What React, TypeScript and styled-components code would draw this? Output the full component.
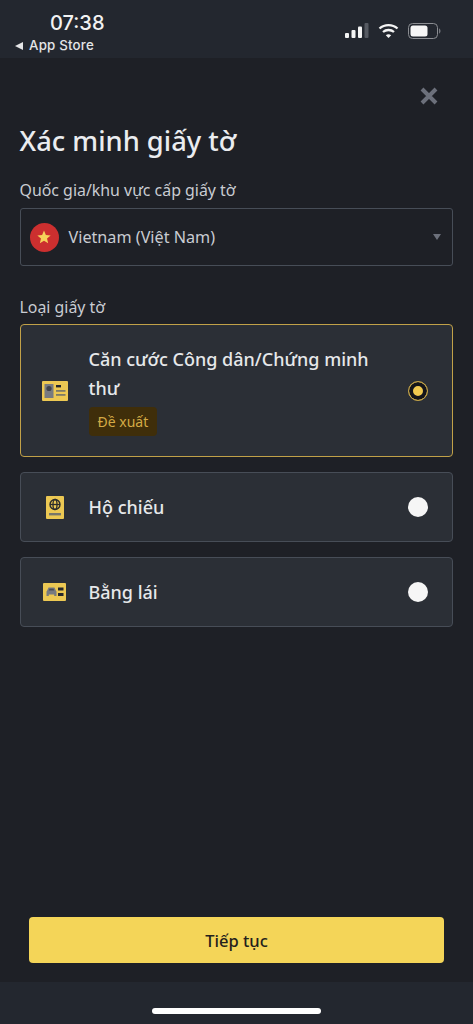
import React from 'react';
import styled, { createGlobalStyle } from 'styled-components';

const GlobalStyle = createGlobalStyle`
  html, body {
    margin: 0;
    padding: 0;
    background: #1e2026;
  }
  * {
    box-sizing: border-box;
  }
`;

const DOC_TYPES = [
  { id: 'id', label: 'Căn cước Công dân/Chứng minh thư', recommended: true, selected: true, icon: <IdIcon /> },
  { id: 'passport', label: 'Hộ chiếu', recommended: false, selected: false, icon: <PassportIcon /> },
  { id: 'license', label: 'Bằng lái', recommended: false, selected: false, icon: <LicenseIcon /> },
];

function IdIcon() {
  return (
    <svg width="26" height="20" viewBox="0 0 26 20">
      <rect width="26" height="20" rx="1" fill="#ecc853" />
      <rect x="2.500" y="3" width="9" height="14" fill="#777a80" />
      <circle cx="7" cy="7.500" r="2.600" fill="#3f434c" />
      <rect x="14" y="4" width="5" height="2.400" fill="#23262d" />
      <rect x="14" y="9" width="9.500" height="1.800" fill="#7d7a66" />
      <rect x="14" y="13" width="9.500" height="1.800" fill="#7d7a66" />
    </svg>
  );
}

function PassportIcon() {
  return (
    <svg width="18" height="23" viewBox="0 0 18 23">
      <rect width="18" height="23" rx="1" fill="#ecc853" />
      <circle cx="9" cy="8.500" r="5" fill="none" stroke="#2b2c2c" strokeWidth="1.400" />
      <ellipse cx="9" cy="8.500" rx="2" ry="5" fill="none" stroke="#2b2c2c" strokeWidth="1.300" />
      <path d="M4 8.500h10" stroke="#2b2c2c" strokeWidth="1.300" />
      <rect x="3" y="17" width="12" height="2.400" fill="#77766a" />
    </svg>
  );
}

function LicenseIcon() {
  return (
    <svg width="23" height="18" viewBox="0 0 23 18">
      <rect width="23" height="18" rx="1" fill="#ecc853" />
      <path d="M5.500 4.500h6l1.300 3 .7 1v4.500h-2.300v-1.500H5.800V13H3.500V8.500l.7-1z" fill="#777a80" />
      <path d="M6.500 5.800h4l.7 1.800H5.800z" fill="#4a4d55" />
      <rect x="15" y="4.500" width="5.500" height="3" fill="#26282c" />
      <rect x="15" y="10" width="5.500" height="3" fill="#26282c" />
    </svg>
  );
}

function App() {
  return (
    <Screen>
      <GlobalStyle />
      <StatusBar>
        <StatusLeft>
          <Clock>07:38</Clock>
          <BackLink>
            <BackArrow />
            App Store
          </BackLink>
        </StatusLeft>
        <StatusIcons>
          <svg width="24" height="16" viewBox="0 0 24 16">
            <rect x="0" y="10" width="4" height="5" rx="1" fill="#f4f4f4" />
            <rect x="6.500" y="7" width="4" height="8" rx="1" fill="#f4f4f4" />
            <rect x="13" y="3.500" width="4" height="11.500" rx="1" fill="#f4f4f4" />
            <rect x="19.500" y="0" width="4" height="15" rx="1" fill="#565a62" />
          </svg>
          <svg width="21" height="16" viewBox="0 0 21 16" fill="none" stroke="#f4f4f4" strokeWidth="2.300">
            <path d="M1.500 5.500c5-4.600 13-4.600 18 0" />
            <path d="M5 9c3-2.700 8-2.700 11 0" />
            <path d="M10.500 15 7.800 12.200c1.500-1.300 3.900-1.300 5.400 0z" fill="#f4f4f4" stroke="none" />
          </svg>
          <svg width="33" height="16" viewBox="0 0 33 16">
            <rect x="0.500" y="0.500" width="29" height="15" rx="4" fill="none" stroke="#8b8d92" />
            <rect x="2.500" y="2.500" width="17" height="11" rx="2.500" fill="#f6f6f6" />
            <path d="M31 5.500c1 .3 1.500 1.300 1.500 2.500s-.5 2.200-1.500 2.500z" fill="#74767c" />
          </svg>
        </StatusIcons>
      </StatusBar>

      <Main>
        <CloseRow>
          <svg width="20" height="20" viewBox="0 0 20 20">
            <path d="M3 3l14 14M17 3 3 17" stroke="#6c707b" strokeWidth="4" />
          </svg>
        </CloseRow>
        <Title>Xác minh giấy tờ</Title>
        <FieldLabel>Quốc gia/khu vực cấp giấy tờ</FieldLabel>
        <Select>
          <Flag>
            <svg width="14" height="14" viewBox="0 0 24 24">
              <path d="M12 1l3.200 7.600 8.200.7-6.200 5.400 1.900 8L12 18.400 4.900 22.700l1.900-8L.6 9.300l8.200-.7z" fill="#f6d25a" />
            </svg>
          </Flag>
          <SelectText>Vietnam (Việt Nam)</SelectText>
          <Caret />
        </Select>
        <TypeLabel>Loại giấy tờ</TypeLabel>
        <CardList>
          {DOC_TYPES.map((doc) => (
            <Card key={doc.id} $selected={doc.selected}>
              <IconSlot>{doc.icon}</IconSlot>
              <CardBody>
                <CardTitle>{doc.label}</CardTitle>
                {doc.recommended && <Badge>Đề xuất</Badge>}
              </CardBody>
              <Radio $selected={doc.selected} />
            </Card>
          ))}
        </CardList>
        <Footer>
          <PrimaryButton>Tiếp tục</PrimaryButton>
        </Footer>
      </Main>

      <HomeArea>
        <HomeBar />
      </HomeArea>
    </Screen>
  );
}

const Screen = styled.div`
  width: 473px;
  height: 1024px;
  display: flex;
  flex-direction: column;
  overflow: hidden;
  background: #1e2026;
  color: #e6e8ea;
  font-family: "Noto Sans", "Open Sans", sans-serif;
`;

const StatusBar = styled.div`
  height: 58px;
  flex: none;
  display: flex;
  justify-content: space-between;
  align-items: flex-start;
  padding: 11px 32px 0 15px;
  background: #23272f;
`;

const StatusLeft = styled.div`
  display: flex;
  flex-direction: column;
  align-items: flex-start;
`;

const Clock = styled.div`
  margin-left: 35px;
  font-family: "Inter", sans-serif;
  font-size: 20px;
  line-height: 24px;
  font-weight: 500;
  color: #f2f2f2;
`;

const BackLink = styled.div`
  display: flex;
  align-items: center;
  gap: 6px;
  font-family: "Inter", sans-serif;
  font-size: 13.300px;
  line-height: 21px;
  font-weight: 500;
  letter-spacing: 0.200px;
  color: #e4e5e7;
`;

const BackArrow = styled.span`
  width: 0;
  height: 0;
  border-top: 4px solid transparent;
  border-bottom: 4px solid transparent;
  border-right: 8px solid #e4e5e7;
`;

const StatusIcons = styled.div`
  display: flex;
  align-items: center;
  gap: 9px;
  margin-top: 12px;
`;

const Main = styled.div`
  flex: 1;
  display: flex;
  flex-direction: column;
  padding: 0 20px 0 19.500px;
`;

const CloseRow = styled.div`
  display: flex;
  justify-content: flex-end;
  padding: 28px 14px 0 0;
  height: 65px;
`;

const Title = styled.h1`
  margin: 0;
  font-size: 27.300px;
  line-height: 36px;
  font-weight: 500;
  color: #eaecef;
`;

const FieldLabel = styled.div`
  margin-top: 19px;
  height: 24px;
  font-size: 15.900px;
  line-height: 24px;
  color: #c9ccd2;
`;

const Select = styled.div`
  margin-top: 6px;
  height: 58px;
  display: flex;
  align-items: center;
  padding: 0 11px 0 9px;
  border: 1px solid #474d57;
  border-radius: 3px;
`;

const Flag = styled.div`
  width: 29px;
  height: 29px;
  flex: none;
  display: flex;
  align-items: center;
  justify-content: center;
  border-radius: 50%;
  background: #cc2f2f;
`;

const SelectText = styled.span`
  flex: 1;
  margin-left: 10px;
  font-size: 16.200px;
  color: #c9ccd2;
`;

const Caret = styled.span`
  width: 0;
  height: 0;
  border-left: 4.500px solid transparent;
  border-right: 4.500px solid transparent;
  border-top: 6px solid #6c707b;
`;

const TypeLabel = styled.div`
  margin-top: 29px;
  height: 24px;
  font-size: 15.900px;
  line-height: 24px;
  color: #c9ccd2;
`;

const CardList = styled.div`
  margin-top: 5px;
  display: flex;
  flex-direction: column;
  gap: 15px;
`;

const Card = styled.div<{ $selected: boolean }>`
  min-height: 70px;
  display: flex;
  align-items: center;
  padding: ${(p) => (p.$selected ? '20px' : '0')} 24px ${(p) => (p.$selected ? '20px' : '0')} 0;
  background: #2b2f36;
  border: 1px solid ${(p) => (p.$selected ? '#c1a148' : '#474d57')};
  border-radius: 4px;
`;

const IconSlot = styled.div`
  width: 68px;
  flex: none;
  display: flex;
  justify-content: center;
`;

const CardBody = styled.div`
  flex: 1;
  display: flex;
  flex-direction: column;
  align-items: flex-start;
  padding-right: 18px;
`;

const CardTitle = styled.div`
  font-size: 18px;
  line-height: 29px;
  font-weight: 500;
  color: #e6e8ea;
`;

const Badge = styled.div`
  margin-top: 4px;
  height: 29px;
  display: flex;
  align-items: center;
  padding: 0 9px;
  font-size: 14px;
  color: #d3aa45;
  background: #3f2e0a;
  border-radius: 4px;
`;

const Radio = styled.span<{ $selected: boolean }>`
  width: 20px;
  height: 20px;
  flex: none;
  border-radius: 50%;
  background: ${(p) => (p.$selected ? '#f0c94f' : '#f6f6f6')};
  border: ${(p) => (p.$selected ? '1px solid #c1a148' : 'none')};
  box-shadow: ${(p) => (p.$selected ? 'inset 0 0 0 4px #14151a' : 'none')};
`;

const Footer = styled.div`
  margin-top: auto;
  padding: 0 9px 19px 9.500px;
`;

const PrimaryButton = styled.button`
  width: 100%;
  height: 46px;
  border: none;
  border-radius: 4px;
  background: #f4d558;
  color: #23211c;
  font-family: inherit;
  font-size: 16.500px;
  font-weight: 500;
`;

const HomeArea = styled.div`
  height: 42px;
  flex: none;
  display: flex;
  justify-content: center;
  padding-top: 26px;
  background: #23272f;
`;

const HomeBar = styled.div`
  width: 169px;
  height: 6px;
  border-radius: 3px;
  background: #ffffff;
`;

export default App;
